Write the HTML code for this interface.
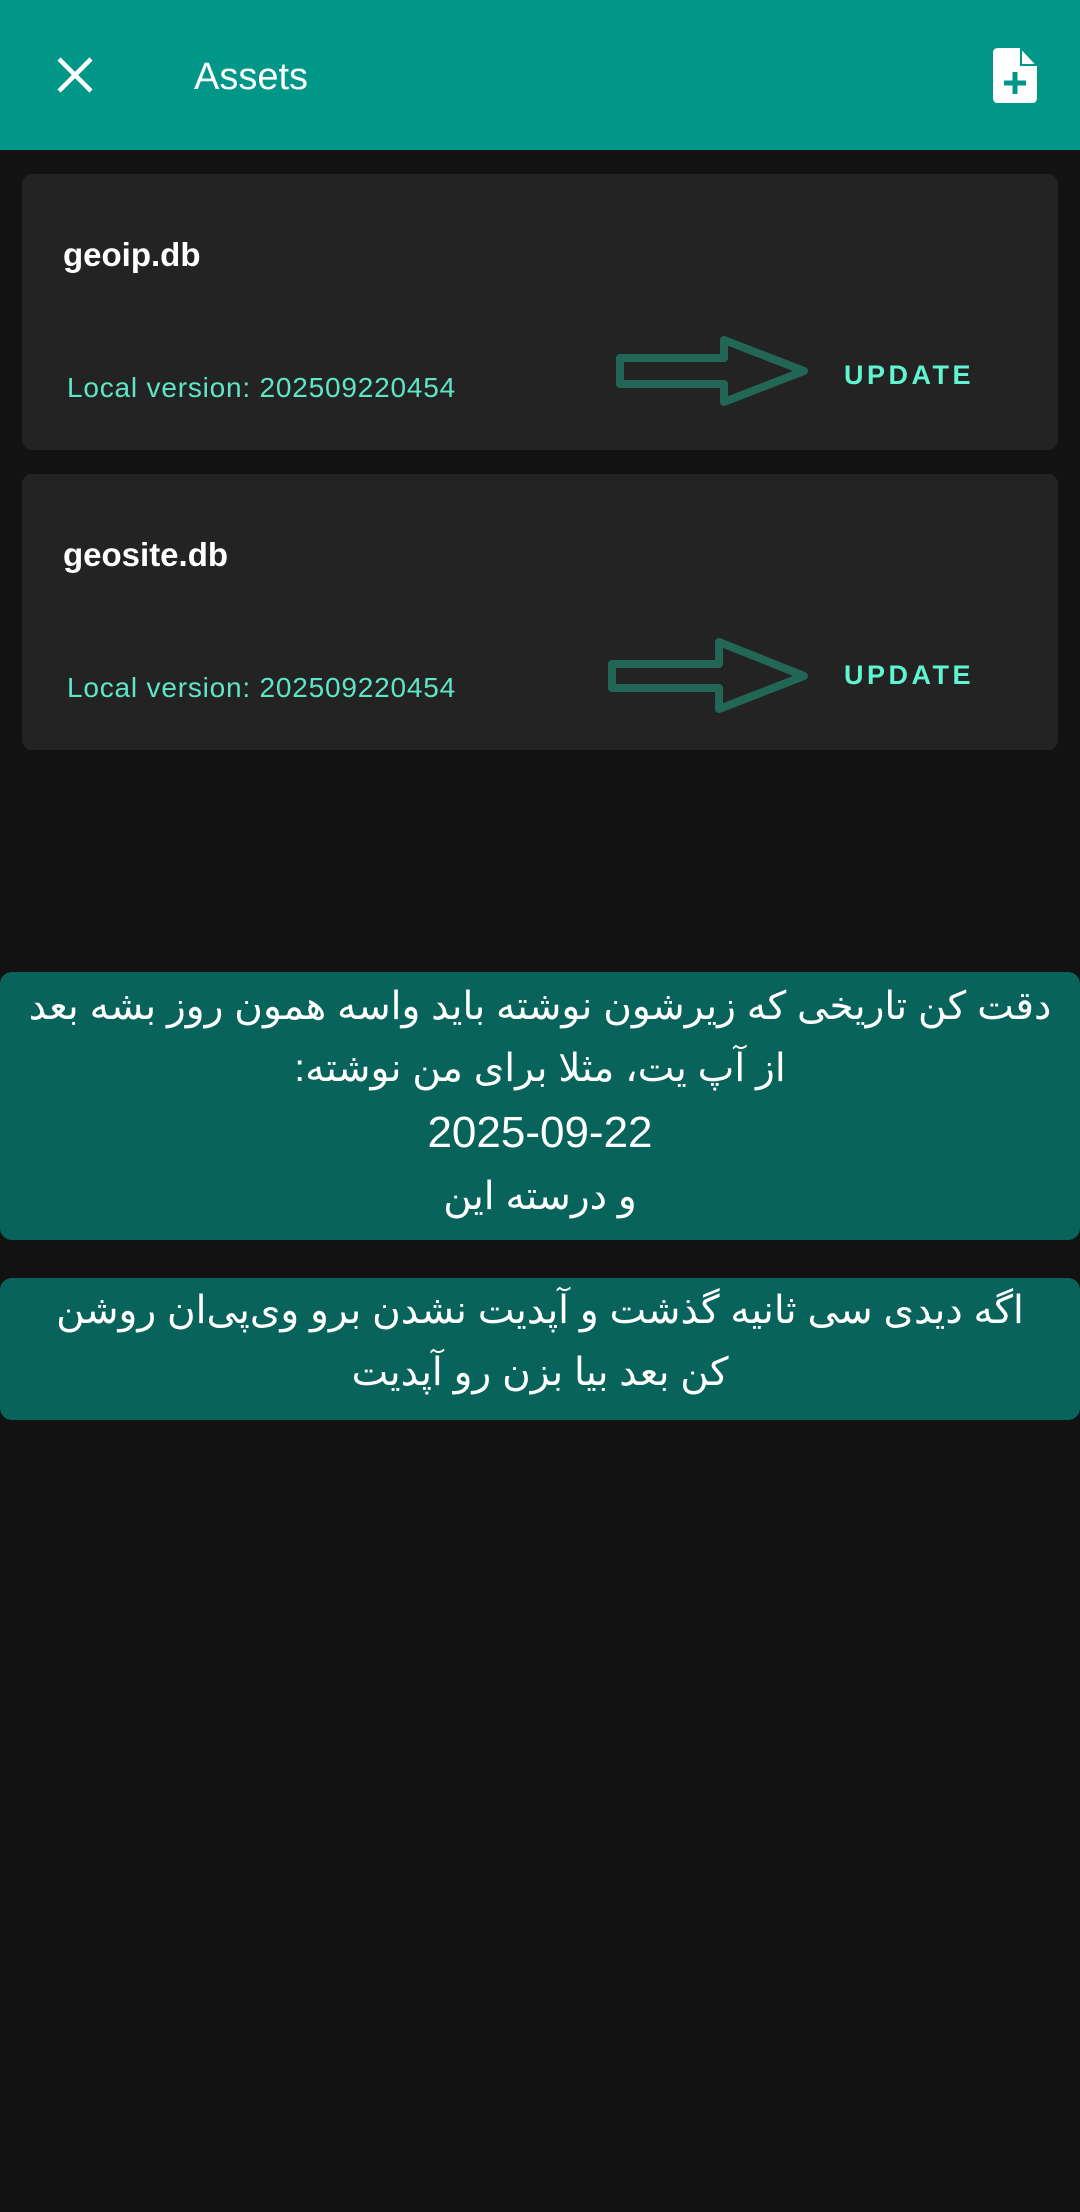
<!DOCTYPE html>
<html><head><meta charset="utf-8"><style>
*{margin:0;padding:0;box-sizing:border-box}
body{width:1080px;height:2212px;background:#121212;font-family:"Liberation Sans",sans-serif;position:relative;overflow:hidden}
.bar{position:absolute;left:0;top:0;width:1080px;height:150px;background:#009688}
.title{position:absolute;left:194px;top:56px;font-size:38px;color:#fff;font-weight:500}
.card{position:absolute;left:22px;width:1036px;height:276px;background:#232323;border-radius:10px}
.name{position:absolute;left:41px;font-size:33px;color:#fff;font-weight:bold}
.ver{position:absolute;left:45px;font-size:28px;color:#5ee6c6;letter-spacing:0.8px}
.upd{position:absolute;left:822px;font-size:27px;color:#5ef5d0;font-weight:bold;letter-spacing:3.5px}
.ban{position:absolute;left:0;width:1080px;background:#08635a;border-radius:12px;color:#fff;text-align:center;font-family:"Liberation Sans","DejaVu Sans",sans-serif;font-size:39px;direction:rtl;white-space:nowrap;overflow:hidden}
</style></head><body>
<div class="bar"></div>
<svg style="position:absolute;left:56px;top:56px" width="38" height="38" viewBox="0 0 38 38"><path d="M3 3L35 35M35 3L3 35" stroke="#fff" stroke-width="4.5"/></svg>
<div class="title">Assets</div>
<svg style="position:absolute;left:993px;top:48px" width="44" height="55" viewBox="0 0 44 55"><path d="M5 0H28L44 17V50Q44 55 39 55H5Q0 55 0 50V5Q0 0 5 0Z" fill="#fff"/><path d="M28 0L44 17H28Z" fill="#fff" stroke="#009688" stroke-width="2"/><path d="M22 24V46M11 35H33" stroke="#009688" stroke-width="5"/></svg>

<div class="card" style="top:174px">
<div class="name" style="top:62px">geoip.db</div>
<div class="ver" style="top:198px">Local version: 202509220454</div>
<svg style="position:absolute;left:592px;top:160px" width="210" height="80" viewBox="0 0 210 80"><path d="M6 24H110V6L190 37L110 68V50H6Z" fill="none" stroke="#226656" stroke-width="8" stroke-linejoin="round"/></svg>
<div class="upd" style="top:186px">UPDATE</div>
</div>
<div class="card" style="top:474px">
<div class="name" style="top:62px">geosite.db</div>
<div class="ver" style="top:198px">Local version: 202509220454</div>
<svg style="position:absolute;left:584px;top:162px" width="220" height="80" viewBox="0 0 220 80"><path d="M6 28H113V6L198 40L113 73V52H6Z" fill="none" stroke="#226656" stroke-width="8" stroke-linejoin="round"/></svg>
<div class="upd" style="top:186px">UPDATE</div>
</div>

<div class="ban" style="top:972px;height:268px;padding-top:4px;line-height:62px">
<div>دقت کن تاریخی که زیرشون نوشته باید واسه همون روز بشه بعد</div>
<div>از آپ یت، مثلا برای من نوشته:</div>
<div style="font-size:44px;line-height:66px">2025-09-22</div>
<div>و درسته این</div>
</div>
<div class="ban" style="top:1278px;height:142px;padding-top:2px;line-height:62px">
<div>اگه دیدی سی ثانیه گذشت و آپدیت نشدن برو وی‌پی‌ان روشن</div>
<div>کن بعد بیا بزن رو آپدیت</div>
</div>
</body></html>
